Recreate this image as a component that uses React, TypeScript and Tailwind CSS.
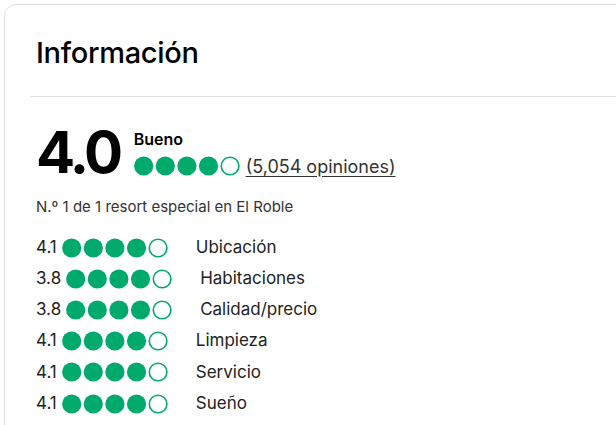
const GREEN = '#00aa6c';

interface SubRating {
  score: string;
  label: string;
}

const subRatings: SubRating[] = [
  { score: '4.1', label: 'Ubicación' },
  { score: '3.8', label: 'Habitaciones' },
  { score: '3.8', label: 'Calidad/precio' },
  { score: '4.1', label: 'Limpieza' },
  { score: '4.1', label: 'Servicio' },
  { score: '4.1', label: 'Sueño' },
];

function Bubbles({ filled }: { filled: number }) {
  return (
    <svg width="106" height="20" viewBox="0 0 106 20" className="shrink-0">
      {[0, 1, 2, 3, 4].map((i) => {
        const cx = 9.7 + i * 21.6;
        return i < filled ? (
          <circle key={i} cx={cx} cy={10} r={9.6} fill={GREEN} />
        ) : (
          <circle key={i} cx={cx} cy={10} r={8.8} fill="none" stroke={GREEN} strokeWidth={1.6} />
        );
      })}
    </svg>
  );
}

export default function App() {
  return (
    <div
      className="w-full h-[425px] overflow-hidden bg-white pl-[4px] pt-[4px]"
      style={{ fontFamily: 'Inter, "Noto Sans", Arial, sans-serif' }}
    >
      <div className="w-[720px] h-[480px] border border-[#e0e0e0] rounded-[12px] pt-[32px] pl-[31px]">
        <h1 className="text-[29px] leading-[32px] font-medium text-black tracking-[-0.01em]">Información</h1>
        <div className="h-px bg-[#e0e0e0] mt-[27px] -ml-[6px]" />

        <div className="flex items-start mt-[26px]">
          <div className="text-[58px] leading-[58px] font-bold text-black tracking-[-0.06em]">4.0</div>
          <div className="ml-[14px] pt-[6px]">
            <div className="text-[16px] leading-[20px] font-semibold text-black">Bueno</div>
            <div className="flex items-center mt-[6px]">
              <Bubbles filled={4} />
              <a className="ml-[6px] pt-[2px] text-[18px] leading-[20px] text-[#333] underline underline-offset-[3px]">
                (5,054 opiniones)
              </a>
            </div>
          </div>
        </div>

        <p className="mt-[16px] text-[15px] leading-[20px] text-[#333]">N.º 1 de 1 resort especial en El Roble</p>

        <div className="mt-[15px] flex flex-col">
          {subRatings.map((r) => (
            <div key={r.label} className="flex items-center h-[31.2px] text-[17px] text-[#222]">
              <span>{r.score}</span>
              <span className="ml-[5px]">
                <Bubbles filled={4} />
              </span>
              <span className="ml-[28px]">{r.label}</span>
            </div>
          ))}
        </div>
      </div>
    </div>
  );
}
